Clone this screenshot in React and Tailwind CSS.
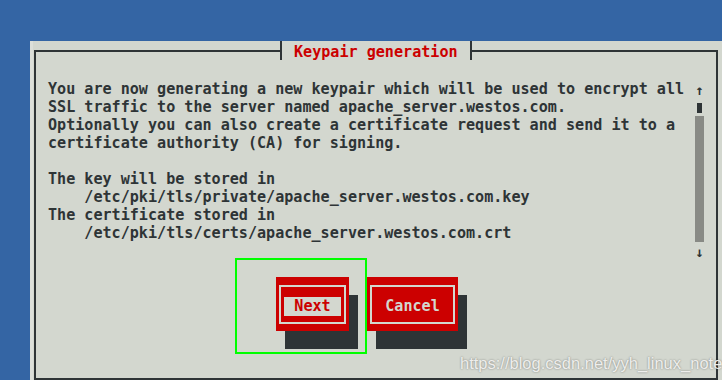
import React from 'react';

const lines = [
    'You are now generating a new keypair which will be used to encrypt all',
    'SSL traffic to the server named apache_server.westos.com.',
    'Optionally you can also create a certificate request and send it to a',
    'certificate authority (CA) for signing.',
    '',
    'The key will be stored in',
    '    /etc/pki/tls/private/apache_server.westos.com.key',
    'The certificate stored in',
    '    /etc/pki/tls/certs/apache_server.westos.com.crt',
];

const Scrollbar = () => (
    <div className="w-[9px] flex flex-col text-[#2e3436]">
        <div className="h-[18px] flex items-center justify-center text-[14px] leading-none pt-[2px]">↑</div>
        <div className="h-[18px] pt-[5px] pl-[2px]">
            <div className="w-[5px] h-[10px] bg-[#2e3436]" />
        </div>
        <div className="h-[126px] bg-[#888a85]" />
        <div className="h-[18px] flex items-center justify-center text-[14px] leading-none pt-[2px]">↓</div>
    </div>
);

const Button = ({ label, focused, width }) => (
    <div
        className={`h-[54px] bg-[#cc0000] pt-[8px] px-[3px] pb-[7px] shadow-[9px_18px_0_#2e3436] ${width}`}
    >
        <div className="h-full border-2 border-[#d3d7cf] flex items-center justify-center pt-[3px]">
            {focused ? (
                <span className="bg-[#d3d7cf] text-[#cc0000] px-[10px] h-[19px] leading-[19px]">{label}</span>
            ) : (
                <span className="text-[#d3d7cf] leading-[19px]">{label}</span>
            )}
        </div>
    </div>
);

export default function App() {
    return (
        <div className="relative w-[722px] h-[380px] overflow-hidden bg-[#3465a4] pt-[41px] pl-[30px] font-['DejaVu_Sans_Mono',monospace] font-bold text-[15.1px]">
            <div className="w-[720px] h-[400px] bg-[#d3d7cf] border-l-[3px] border-[#dcdfd9] pl-[1px] pt-[9px]">
                <div className="relative w-[684px] h-[330px] border-2 border-[#2e3436]">
                    {/* title over the top border */}
                    <div className="absolute left-[244px] top-[-11px] flex items-start bg-[#d3d7cf]">
                        <div className="w-[2px] h-[19px] bg-[#2e3436]" />
                        <div className="mt-[2px] pl-[12px] pr-[12px] leading-[18px] text-[#cc0000]">Keypair generation</div>
                        <div className="w-[2px] h-[19px] bg-[#2e3436]" />
                    </div>

                    <div className="flex pt-[28px] pl-[12px] pr-[12px]">
                        <div className="flex-1 h-[180px] text-[#2e3436] leading-[18px] whitespace-pre">
                            {lines.map((line, i) => (
                                <div key={i} className="h-[18px]">{line}</div>
                            ))}
                        </div>
                        <Scrollbar />
                    </div>

                    <div className="flex gap-[18px] mt-[17px] pl-[240px]">
                        <Button label="Next" focused width="w-[73px]" />
                        <Button label="Cancel" width="w-[91px]" />
                    </div>

                    {/* focus annotation */}
                    <div className="absolute left-[199px] top-[206px] w-[132px] h-[96px] border-2 border-[#00ff00]" />
                </div>
            </div>

            <div className="absolute left-[460px] top-[351px] font-['Liberation_Sans',Arial,sans-serif] font-normal text-[16.5px] text-[#eeeeec] [text-shadow:0_0_2px_rgba(0,0,0,0.45)]">
                https://blog.csdn.net/yyh_linux_note
            </div>
        </div>
    );
}
